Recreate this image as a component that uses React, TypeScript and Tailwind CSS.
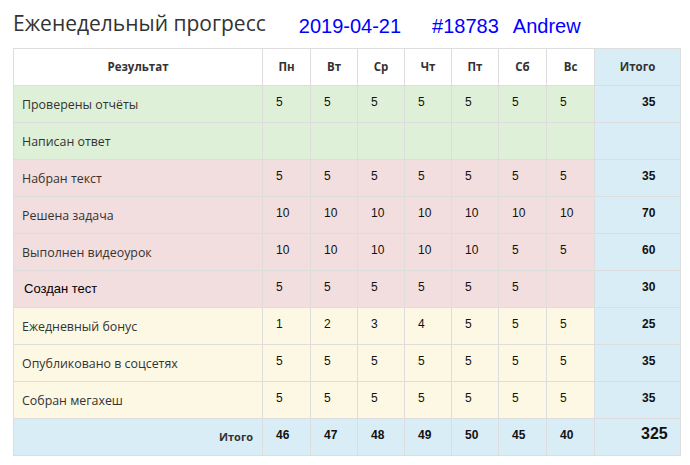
const days = ['Пн', 'Вт', 'Ср', 'Чт', 'Пт', 'Сб', 'Вс']

type Row = { label: string; values: (number | null)[]; total: number | null; tone: 'green' | 'red' | 'yellow'; plain?: boolean }

const rows: Row[] = [
  { label: 'Проверены отчёты', values: [5, 5, 5, 5, 5, 5, 5], total: 35, tone: 'green' },
  { label: 'Написан ответ', values: [null, null, null, null, null, null, null], total: null, tone: 'green' },
  { label: 'Набран текст', values: [5, 5, 5, 5, 5, 5, 5], total: 35, tone: 'red' },
  { label: 'Решена задача', values: [10, 10, 10, 10, 10, 10, 10], total: 70, tone: 'red' },
  { label: 'Выполнен видеоурок', values: [10, 10, 10, 10, 10, 5, 5], total: 60, tone: 'red' },
  { label: 'Создан тест', values: [5, 5, 5, 5, 5, 5, null], total: 30, tone: 'red', plain: true },
  { label: 'Ежедневный бонус', values: [1, 2, 3, 4, 5, 5, 5], total: 25, tone: 'yellow' },
  { label: 'Опубликовано в соцсетях', values: [5, 5, 5, 5, 5, 5, 5], total: 35, tone: 'yellow' },
  { label: 'Собран мегахеш', values: [5, 5, 5, 5, 5, 5, 5], total: 35, tone: 'yellow' },
]

const totals = [46, 47, 48, 49, 50, 45, 40]

const toneBg = {
  green: 'bg-[#dff0d8]',
  red: 'bg-[#f2dede]',
  yellow: 'bg-[#fcf8e3]',
}

const cell = 'h-[37px] border-r border-b border-[#ddd]'
const num = "pl-[13px] pt-2 text-[12px] leading-[17px] text-[#111] font-['Liberation_Sans',Arial,sans-serif]"
const head = "flex items-center justify-center text-[11.5px] font-bold text-[#333] font-['Open_Sans',sans-serif]"

export default function App() {
  return (
    <div className="w-[690px] h-[465px] bg-white">
      {/* ##### TITLE ##### */}
      <div className="flex items-baseline h-[48px] pl-[13px] pt-[4px]">
        <h1 className="text-[21px] leading-[38px] text-[#333] font-['Open_Sans',sans-serif]">Еженедельный прогресс</h1>
        <div className="flex items-baseline ml-[33px] text-[20px] text-[#0000ff] font-['Liberation_Sans',Arial,sans-serif] translate-y-[2px]">
          <span>2019-04-21</span>
          <span className="ml-[31px]">#18783</span>
          <span className="ml-[14px]">Andrew</span>
        </div>
      </div>

      {/* ##### TABLE ##### */}
      <div className="ml-[13px] w-[668px] grid grid-cols-[249px_48px_47px_47px_47px_47px_48px_48px_86px] border-l border-t border-[#ddd]">
        <div className={`${cell} ${head} bg-white`}>Результат</div>
        {days.map((d) => (
          <div key={d} className={`${cell} ${head} bg-white`}>{d}</div>
        ))}
        <div className={`${cell} ${head} bg-[#d9edf7]`}>Итого</div>

        {rows.map((r) => (
          <div key={r.label} className="contents">
            <div
              className={`${cell} ${toneBg[r.tone]} flex items-center ${
                r.plain
                  ? "pl-[10px] text-[13px] text-black font-['Liberation_Sans',Arial,sans-serif]"
                  : "pl-[8px] pt-[2px] text-[12.4px] text-[#333] font-['Open_Sans',sans-serif]"
              }`}
            >
              {r.label}
            </div>
            {r.values.map((v, i) => (
              <div key={i} className={`${cell} ${toneBg[r.tone]} ${num}`}>{v ?? ''}</div>
            ))}
            <div className={`${cell} bg-[#d9edf7] ${num} pl-[47px] font-bold`}>{r.total ?? ''}</div>
          </div>
        ))}

        <div className={`${cell} bg-[#d9edf7] flex items-center justify-end pr-[9px] pt-[1px] text-[11px] font-bold text-[#333] font-['Open_Sans',sans-serif]`}>
          Итого
        </div>
        {totals.map((t, i) => (
          <div key={i} className={`${cell} bg-[#d9edf7] ${num} font-bold`}>{t}</div>
        ))}
        <div className={`${cell} bg-[#d9edf7] pl-[46px] pt-[6px] text-[16px] leading-[18px] font-bold text-[#111] font-['Liberation_Sans',Arial,sans-serif]`}>
          325
        </div>
      </div>
    </div>
  )
}
